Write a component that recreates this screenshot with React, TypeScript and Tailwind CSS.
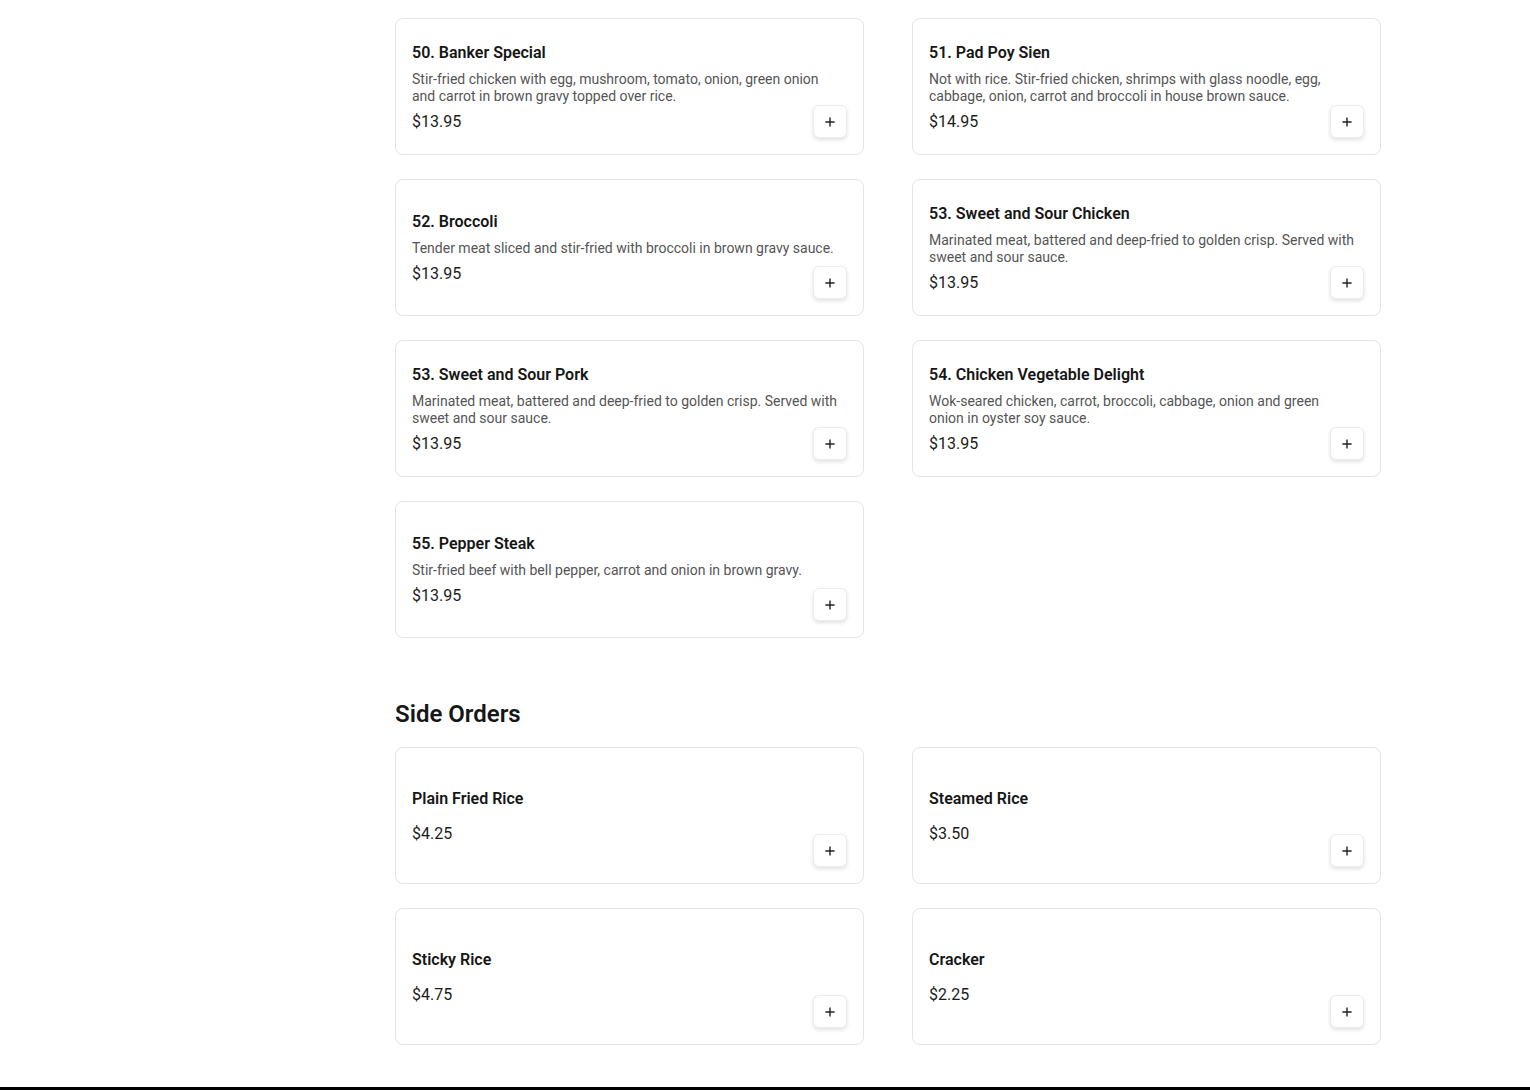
import React from 'react';
import { Plus } from 'lucide-react';

interface MenuItem {
    name: string;
    description?: string;
    price: string;
}

const mains: MenuItem[] = [
    {
        name: '50. Banker Special',
        description: 'Stir-fried chicken with egg, mushroom, tomato, onion, green onion and carrot in brown gravy topped over rice.',
        price: '$13.95',
    },
    {
        name: '51. Pad Poy Sien',
        description: 'Not with rice. Stir-fried chicken, shrimps with glass noodle, egg, cabbage, onion, carrot and broccoli in house brown sauce.',
        price: '$14.95',
    },
    {
        name: '52. Broccoli',
        description: 'Tender meat sliced and stir-fried with broccoli in brown gravy sauce.',
        price: '$13.95',
    },
    {
        name: '53. Sweet and Sour Chicken',
        description: 'Marinated meat, battered and deep-fried to golden crisp. Served with sweet and sour sauce.',
        price: '$13.95',
    },
    {
        name: '53. Sweet and Sour Pork',
        description: 'Marinated meat, battered and deep-fried to golden crisp. Served with sweet and sour sauce.',
        price: '$13.95',
    },
    {
        name: '54. Chicken Vegetable Delight',
        description: 'Wok-seared chicken, carrot, broccoli, cabbage, onion and green onion in oyster soy sauce.',
        price: '$13.95',
    },
    {
        name: '55. Pepper Steak',
        description: 'Stir-fried beef with bell pepper, carrot and onion in brown gravy.',
        price: '$13.95',
    },
];

const sides: MenuItem[] = [
    { name: 'Plain Fried Rice', price: '$4.25' },
    { name: 'Steamed Rice', price: '$3.50' },
    { name: 'Sticky Rice', price: '$4.75' },
    { name: 'Cracker', price: '$2.25' },
];

const MenuCard: React.FC<{ item: MenuItem }> = ({ item }) => (
    <div className="relative flex h-[137px] items-center rounded-lg border border-[#e4e4e4] bg-white px-4">
        <div className="w-full pr-[10px]">
            <h3 className="text-base leading-[26px] font-semibold text-[#161616]">{item.name}</h3>
            {/* padding, not margin, so an empty description still keeps its spacing */}
            <p className="pt-[5px] pb-[5px] text-sm leading-[17px] text-[#555555]">{item.description}</p>
            <div className="text-base leading-6 text-[#1c1c1c]">{item.price}</div>
        </div>
        {/* Add button */}
        <button className="absolute right-4 bottom-4 flex h-[33px] w-[34px] items-center justify-center rounded-md border border-[#ececec] bg-white text-[#222] shadow-[0_2px_4px_rgba(0,0,0,0.12)]">
            <Plus size={14} strokeWidth={2.4} />
        </button>
    </div>
);

export default function App() {
    return (
        <div className="flex min-h-[1090px] flex-col bg-white font-['Roboto',sans-serif]">
            <div className="flex flex-1">
                {/* Sidebar spacer */}
                <aside className="w-[395px] shrink-0" />

                <main className="w-[986px] pt-[18px] pb-[42px]">
                    <div className="grid grid-cols-2 gap-x-12 gap-y-6">
                        {mains.map((item) => (
                            <MenuCard key={item.name} item={item} />
                        ))}
                    </div>

                    <section>
                        <h2 className="mt-[60px] mb-[17px] text-2xl leading-8 font-semibold text-[#161616]">Side Orders</h2>
                        <div className="grid grid-cols-2 gap-x-12 gap-y-6">
                            {sides.map((item) => (
                                <MenuCard key={item.name} item={item} />
                            ))}
                        </div>
                    </section>
                </main>
            </div>

            <footer className="h-[4px] bg-black" />
        </div>
    );
}
